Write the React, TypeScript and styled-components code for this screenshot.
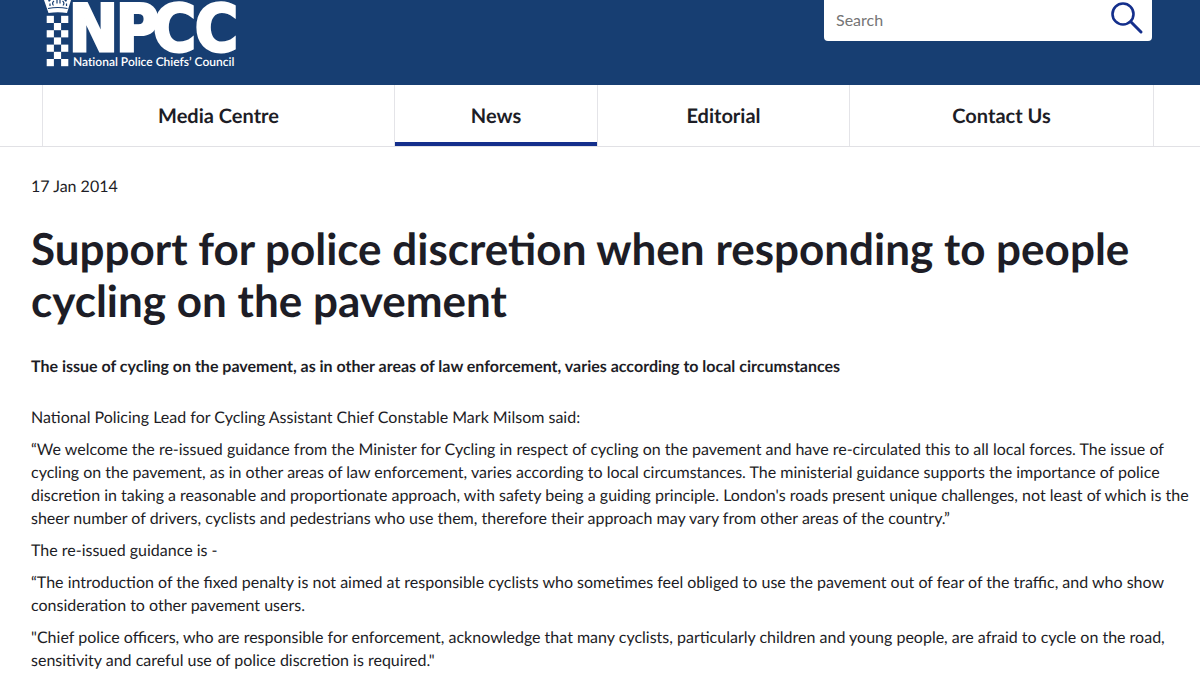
import React from "react";
import styled, { createGlobalStyle } from "styled-components";

const GlobalStyle = createGlobalStyle`
  * { box-sizing: border-box; }
  body {
    margin: 0;
    background: #fff;
    color: #1d1d26;
    font-family: Lato, "Liberation Sans", sans-serif;
    font-size: 16px;
    line-height: 23px;
    text-rendering: geometricPrecision;
  }
`;

const Header = styled.header`
  display: flex;
  justify-content: space-between;
  align-items: flex-start;
  height: 85px;
  padding: 0 48px 0 42px;
  background: #173e72;
`;

const LogoLink = styled.a`
  display: block;
  line-height: 0;
`;

const LogoLetters = styled.g`
  font-family: "DejaVu Sans Condensed", "DejaVu Sans", sans-serif;
  font-size: 65px;
  font-weight: 700;
  stroke: #fff;
  stroke-width: 3px;
`;

const LogoCaption = styled.text`
  font-family: Lato, sans-serif;
  font-size: 12px;
  font-weight: 600;
  font-variant-ligatures: none;
`;

const SearchForm = styled.form`
  display: flex;
  align-items: stretch;
  width: 328px;
  height: 41px;
  background: #fff;
  border-radius: 0 0 4px 4px;
`;

const SearchInput = styled.input`
  flex: 1;
  min-width: 0;
  padding: 0 12px 3px;
  border: 0;
  background: transparent;
  font: inherit;
  color: #1d1d26;
  &::placeholder { color: #757575; opacity: 1; }
`;

const SearchButton = styled.button`
  display: flex;
  padding: 0 8px 0 0;
  border: 0;
  background: transparent;
  cursor: pointer;
`;

const Nav = styled.nav`
  padding: 0 46px 0 42px;
  border-bottom: 1px solid #e1e1e5;
`;

const NavList = styled.ul`
  display: grid;
  grid-template-columns: 352fr 203fr 252fr 304fr;
  margin: 0;
  padding: 0;
  list-style: none;
  border-right: 1px solid #e4e4e8;
`;

const NavLink = styled.a<{ $active?: boolean }>`
  display: block;
  padding: 17px 0 15px;
  border-left: 1px solid #e4e4e8;
  font-size: 20px;
  line-height: 29px;
  font-weight: 700;
  text-align: center;
  text-decoration: none;
  color: #1d1d26;
  box-shadow: ${(p) => (p.$active ? "inset 0 -4px 0 #142f8c" : "none")};
`;

const Article = styled.main`
  padding: 28px 8px 16px 31px;
`;

const DateLine = styled.time`
  display: block;
`;

const Title = styled.h1`
  margin: 25px 0 0;
  font-size: 44px;
  line-height: 52px;
  font-weight: 700;
`;

const Summary = styled.p`
  margin: 28px 0;
  font-weight: 700;
`;

const Body = styled.div`
  display: flex;
  flex-direction: column;
  gap: 9px;
`;

const Paragraph = styled.p`
  margin: 0;
`;

const navItems = ["Media Centre", "News", "Editorial", "Contact Us"];

const paragraphs = [
  "National Policing Lead for Cycling Assistant Chief Constable Mark Milsom said:",
  "“We welcome the re-issued guidance from the Minister for Cycling in respect of cycling on the pavement and have re-circulated this to all local forces. The issue of cycling on the pavement, as in other areas of law enforcement, varies according to local circumstances. The ministerial guidance supports the importance of police discretion in taking a reasonable and proportionate approach, with safety being a guiding principle. London's roads present unique challenges, not least of which is the sheer number of drivers, cyclists and pedestrians who use them, therefore their approach may vary from other areas of the country.”",
  "The re-issued guidance is -",
  "“The introduction of the fixed penalty is not aimed at responsible cyclists who sometimes feel obliged to use the pavement out of fear of the traffic, and who show consideration to other pavement users.",
  "\"Chief police officers, who are responsible for enforcement, acknowledge that many cyclists, particularly children and young people, are afraid to cycle on the road, sensitivity and careful use of police discretion is required.\"",
];

const checks = Array.from({ length: 7 }, (_, row) =>
  row % 2 === 0 ? [0, 2] : [1]
).flatMap((cols, row) => cols.map((col) => ({ col, row })));

function Logo() {
  return (
    <svg width="200" height="72" viewBox="42 0 200 72" fill="#fff" role="img" aria-label="NPCC">
      <path d="M44 0 H48 L49 2 L51 0 H64 L66 2 L67 0 H71 L67 13 Q58 11.6 48.5 13 Z" />
      <path
        d="M48 8.5 Q58 6.5 67.5 8.5 M50 3.5 V6 M54 1 Q51.5 3 53.5 5.5 M57 0 V3.5 M60 0 V3.5 M62.5 1 Q65 3 63 5.5 M66.5 3.5 V6"
        stroke="#173e72"
        strokeWidth="1.2"
        fill="none"
      />
      {checks.map(({ col, row }) => (
        <rect key={`${col}-${row}`} x={46.7 + col * 7.2} y={15.8 + row * 7.2} width="7.2" height="7.2" />
      ))}
      <LogoLetters>
        <text x="69" y="51">N</text>
        <text x="116" y="51">P</text>
        <text x="153" y="51">C</text>
        <text x="195" y="51">C</text>
      </LogoLetters>
      <LogoCaption x="73" y="66">National Police Chiefs’ Council</LogoCaption>
    </svg>
  );
}

export default function App() {
  return (
    <>
      <GlobalStyle />
      <Header>
        <LogoLink href="#" aria-label="National Police Chiefs’ Council"><Logo /></LogoLink>
        <SearchForm role="search" onSubmit={(e) => e.preventDefault()}>
          <SearchInput type="text" placeholder="Search" aria-label="Search" />
          <SearchButton type="submit" aria-label="Submit search">
            <svg width="34" height="36" viewBox="0 0 34 36" fill="none" stroke="#142f8c" strokeLinecap="round">
              <circle cx="13" cy="14" r="10.5" strokeWidth="2.6" />
              <path d="M20.8 21.8 L31 32" strokeWidth="3" />
            </svg>
          </SearchButton>
        </SearchForm>
      </Header>
      <Nav aria-label="Main">
        <NavList>
          {navItems.map((item) => (
            <li key={item}>
              <NavLink href="#" $active={item === "News"} aria-current={item === "News" ? "page" : undefined}>
                {item}
              </NavLink>
            </li>
          ))}
        </NavList>
      </Nav>
      <Article>
        <DateLine dateTime="2014-01-17">17 Jan 2014</DateLine>
        <Title>Support for police discretion when responding to people cycling on the pavement</Title>
        <Summary>The issue of cycling on the pavement, as in other areas of law enforcement, varies according to local circumstances</Summary>
        <Body>
          {paragraphs.map((text) => (
            <Paragraph key={text}>{text}</Paragraph>
          ))}
        </Body>
      </Article>
    </>
  );
}
